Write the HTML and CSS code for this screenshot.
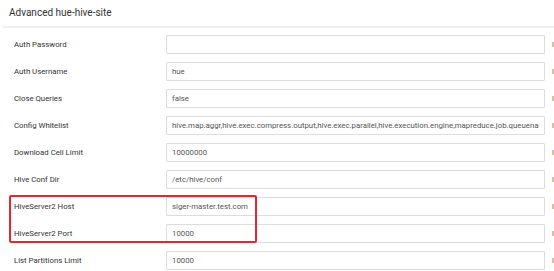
FILE: index.html
```html
<!DOCTYPE html>
<html lang="en">
<head>
    <meta charset="UTF-8">
    <meta name="viewport" content="width=device-width, initial-scale=1.0">
    <title>Advanced hue-hive-site</title>
    <link rel="stylesheet" href="styles.css">
</head>
<body>

    <div class="panel">
        <div class="panel-title">Advanced hue-hive-site</div>

        <div class="rows">
            <div class="row">
                <label class="row-label">Auth Password</label>
                <input class="row-input" type="text" value="">
                <span class="row-icon"></span>
            </div>
            <div class="row">
                <label class="row-label">Auth Username</label>
                <input class="row-input" type="text" value="hue">
                <span class="row-icon"></span>
            </div>
            <div class="row">
                <label class="row-label">Close Queries</label>
                <input class="row-input" type="text" value="false">
                <span class="row-icon"></span>
            </div>
            <div class="row">
                <label class="row-label">Config Whitelist</label>
                <input class="row-input" type="text" value="hive.map.aggr,hive.exec.compress.output,hive.exec.parallel,hive.execution.engine,mapreduce.job.queuename">
                <span class="row-icon"></span>
            </div>
            <div class="row">
                <label class="row-label">Download Cell Limit</label>
                <input class="row-input" type="text" value="10000000">
                <span class="row-icon"></span>
            </div>
            <div class="row">
                <label class="row-label">Hive Conf Dir</label>
                <input class="row-input" type="text" value="/etc/hive/conf">
                <span class="row-icon"></span>
            </div>
            <div class="row">
                <label class="row-label">HiveServer2 Host</label>
                <input class="row-input" type="text" value="siger-master.test.com">
                <span class="row-icon"></span>
            </div>
            <div class="row">
                <label class="row-label">HiveServer2 Port</label>
                <input class="row-input" type="text" value="10000">
                <span class="row-icon"></span>
            </div>
            <div class="row">
                <label class="row-label">List Partitions Limit</label>
                <input class="row-input" type="text" value="10000">
                <span class="row-icon"></span>
            </div>
        </div>

        <div class="highlight"></div>
    </div>

</body>
</html>
```

FILE: styles.css
```css
body {
    margin: 0;
    padding: 0;
    font-family: Roboto, 'Liberation Sans', sans-serif;
    background: #ffffff;
    color: #333333;
    overflow: hidden;
}

.panel {
    position: relative;
    width: 554px;
    height: 271px;
}

.panel-title {
    margin-left: 3px;
    padding-left: 6px;
    height: 26px;
    line-height: 26px;
    font-size: 10px;
    color: #333333;
    border-bottom: 2px solid #f0f0f0;
}

.rows {
    padding-top: 3px;
}

.row {
    display: flex;
    align-items: center;
    height: 27px;
}

.row-label {
    width: 152px;
    padding-left: 14px;
    font-size: 7.8px;
    color: #333333;
}

.row-input {
    box-sizing: border-box;
    width: 379px;
    height: 19px;
    margin: 0;
    padding: 0 5px;
    border: 1px solid #dddddd;
    border-radius: 1px;
    font-family: Roboto, 'Liberation Sans', sans-serif;
    font-size: 7.8px;
    color: #555555;
    background: #ffffff;
    outline: none;
}

.row-icon {
    width: 2px;
    height: 5px;
    margin-left: 7px;
    background: #dcc09a;
}

.highlight {
    position: absolute;
    left: 9px;
    top: 195px;
    width: 244px;
    height: 44px;
    border: 2px solid #e8262b;
    border-radius: 2px;
}
```
